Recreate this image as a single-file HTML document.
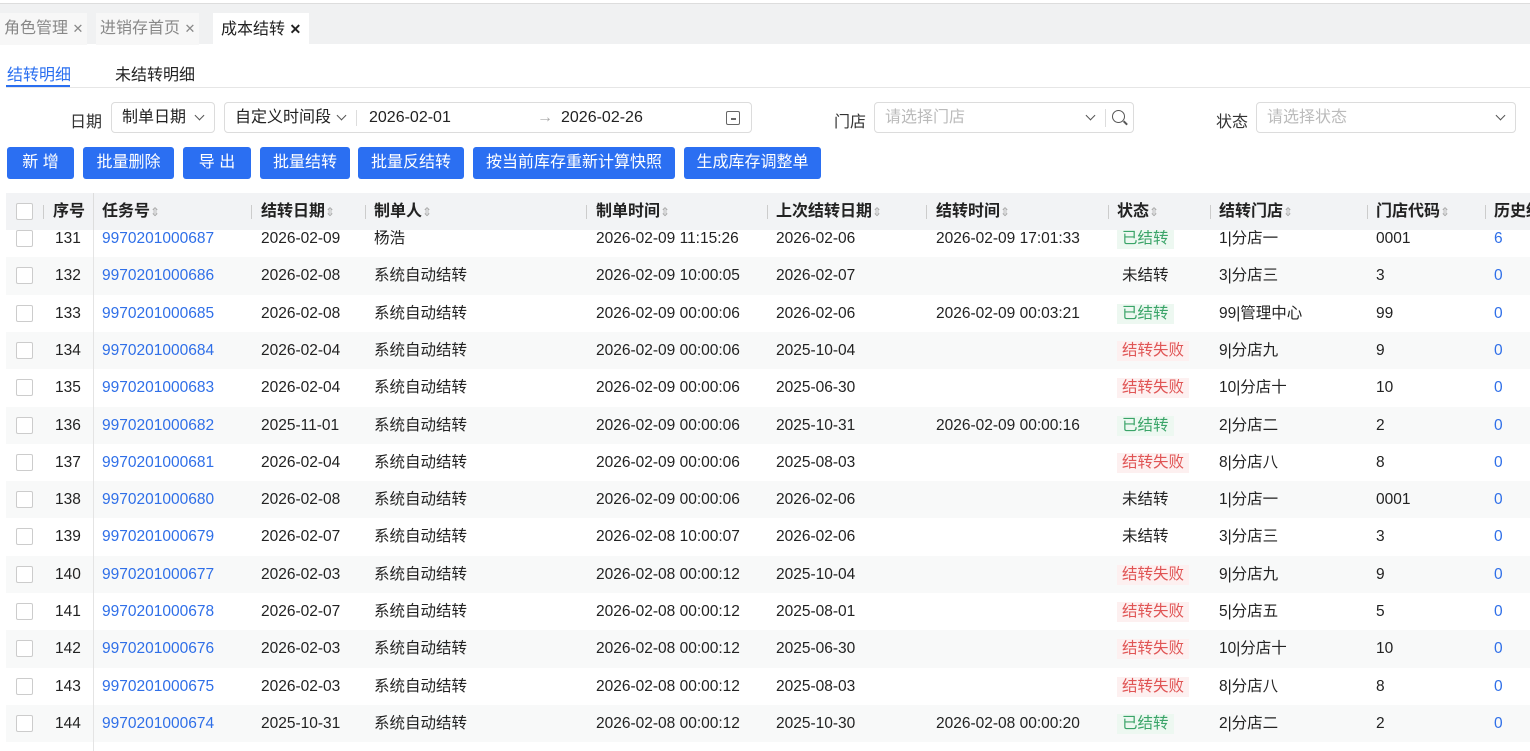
<!DOCTYPE html>
<html><head><meta charset="utf-8"><style>
*{box-sizing:border-box;margin:0;padding:0}
body{width:1530px;height:751px;overflow:hidden;background:#fff;font-family:"Liberation Sans","Noto Sans CJK SC",sans-serif;font-size:15.5px;color:#222;position:relative}
.tabbar{position:absolute;left:0;top:3px;width:1530px;height:41px;background:#f0f1f2;border-top:1px solid #ddd}
.tab{position:absolute;top:9px;height:32px;line-height:32px;padding:0 4px;font-size:16px;color:#888;background:#f7f7f7}
.tab.act{background:#fff;color:#222}
.sub{position:absolute;top:61px;font-size:16px}
.ln{position:absolute;left:6px;top:87px;width:1524px;height:1px;background:#e6e6e6}
.ul{position:absolute;left:6px;top:85px;width:64px;height:2px;background:#2a6ff0}
.lbl{position:absolute;top:108px;font-size:16px;color:#333}
.box{position:absolute;top:102px;height:31px;border:1px solid #dcdcdc;border-radius:4px;line-height:30px;font-size:16px;padding-left:10px}
.ph{color:#bbb}
.chev{position:absolute;width:7px;height:7px;border-right:1.5px solid #555;border-bottom:1.5px solid #555;transform:rotate(45deg)}
.btn{position:absolute;top:147px;height:32px;line-height:32px;background:#2b6ff2;color:#fff;border-radius:3px;text-align:center;font-size:16px}
.hdr{position:absolute;left:6px;top:193px;width:1524px;height:37px;background:#f2f3f5;z-index:2;font-weight:bold;font-size:16px}
.row{position:absolute;left:6px;width:1524px;height:37.3px;line-height:37px}
.row.g{background:#f8f9f9}
.c{position:absolute;top:0;white-space:nowrap}
.cb{position:absolute;left:10px;top:10px;width:17px;height:17px;border:1px solid #ccc;background:#fff;border-radius:2px}
.hdr .c{line-height:37px}
.dv{position:absolute;top:12px;width:1px;height:14px;background:#ccc}
.s{color:#aaa;font-weight:normal;font-size:12px}
a{color:#2f6fe8;text-decoration:none}
.ok{background:#edf8f1;color:#3aa468;padding:0 5px;line-height:20px;display:inline-block}
.no{background:#fdf0f0;color:#e05555;padding:0 5px;line-height:20px;display:inline-block}
.un{padding:0 5px}
</style></head><body>
<div class="tabbar">
<div class="tab" style="left:0">角色管理 <span style="font-size:13px">✕</span></div>
<div class="tab" style="left:96px">进销存首页 <span style="font-size:13px">✕</span></div>
<div class="tab act" style="left:213px;padding:0 8px">成本结转 <b style="font-size:14px">✕</b></div>
</div>
<div class="sub" style="left:7px;color:#2a6ff0">结转明细</div>
<div class="sub" style="left:115px">未结转明细</div>
<div class="ln"></div><div class="ul"></div>

<div class="lbl" style="left:70px">日期</div>
<div class="box" style="left:111px;width:104px">制单日期<span class="chev" style="left:84px;top:9px"></span></div>
<div class="box" style="left:224px;width:528px">自定义时间段<span class="chev" style="left:113px;top:9px"></span>
<span style="position:absolute;left:131px;top:7px;width:1px;height:16px;background:#ddd"></span>
<span style="position:absolute;left:144px">2026-02-01</span>
<span style="position:absolute;left:312px;color:#aaa">→</span>
<span style="position:absolute;left:336px">2026-02-26</span>
<span style="position:absolute;left:501px;top:8px;width:14px;height:14px;border:1.5px solid #666;border-radius:2px"></span>
<span style="position:absolute;left:506px;top:15px;width:5px;height:1.5px;background:#666"></span>
</div>
<div class="lbl" style="left:834px">门店</div>
<div class="box ph" style="left:874px;width:260px">请选择门店<span class="chev" style="left:212px;top:9px"></span>
<span style="position:absolute;left:230px;top:6px;width:1px;height:18px;background:#ddd"></span>
<span style="position:absolute;left:237px;top:7px;width:13px;height:13px;border:1.7px solid #555;border-radius:50%"></span>
<span style="position:absolute;left:248px;top:19px;width:5px;height:1.7px;background:#555;transform:rotate(45deg)"></span></div>
<div class="lbl" style="left:1216px">状态</div>
<div class="box ph" style="left:1256px;width:260px">请选择状态<span class="chev" style="left:240px;top:9px"></span></div>

<div class="btn" style="left:7px;width:67px">新 增</div>
<div class="btn" style="left:83px;width:91px">批量删除</div>
<div class="btn" style="left:183px;width:68px">导 出</div>
<div class="btn" style="left:260px;width:90px">批量结转</div>
<div class="btn" style="left:358px;width:106px">批量反结转</div>
<div class="btn" style="left:473px;width:202px">按当前库存重新计算快照</div>
<div class="btn" style="left:684px;width:137px">生成库存调整单</div>

<div class="hdr">
<span class="cb"></span><span class="dv" style="left:37px"></span>
<span class="c" style="left:47px">序号</span>
<span style="position:absolute;left:87px;top:0;width:1px;height:37px;background:#ddd"></span>
<span class="c" style="left:96px">任务号<span class="s">⇕</span></span><span class="dv" style="left:245px"></span>
<span class="c" style="left:255px">结转日期<span class="s">⇕</span></span><span class="dv" style="left:359px"></span>
<span class="c" style="left:368px">制单人<span class="s">⇕</span></span><span class="dv" style="left:580px"></span>
<span class="c" style="left:590px">制单时间<span class="s">⇕</span></span><span class="dv" style="left:761px"></span>
<span class="c" style="left:770px">上次结转日期<span class="s">⇕</span></span><span class="dv" style="left:920px"></span>
<span class="c" style="left:930px">结转时间<span class="s">⇕</span></span><span class="dv" style="left:1102px"></span>
<span class="c" style="left:1111px">状态<span class="s">⇕</span></span><span class="dv" style="left:1204px"></span>
<span class="c" style="left:1213px">结转门店<span class="s">⇕</span></span><span class="dv" style="left:1361px"></span>
<span class="c" style="left:1370px">门店代码<span class="s">⇕</span></span><span class="dv" style="left:1479px"></span>
<span class="c" style="left:1488px">历史结转</span>
</div>
<div style="position:absolute;left:93px;top:230px;width:1px;height:521px;background:#e4e4e4;z-index:1"></div>

<div class="row" style="top:220px"><span class="cb"></span><span class="c" style="left:49px">131</span><span class="c" style="left:96px"><a>9970201000687</a></span><span class="c" style="left:255px">2026-02-09</span><span class="c" style="left:368px">杨浩</span><span class="c" style="left:590px">2026-02-09 11:15:26</span><span class="c" style="left:770px">2026-02-06</span><span class="c" style="left:930px">2026-02-09 17:01:33</span><span class="c" style="left:1111px"><span class="ok">已结转</span></span><span class="c" style="left:1213px">1|分店一</span><span class="c" style="left:1370px">0001</span><span class="c" style="left:1488px"><a>6</a></span></div>
<div class="row g" style="top:257.3px"><span class="cb"></span><span class="c" style="left:49px">132</span><span class="c" style="left:96px"><a>9970201000686</a></span><span class="c" style="left:255px">2026-02-08</span><span class="c" style="left:368px">系统自动结转</span><span class="c" style="left:590px">2026-02-09 10:00:05</span><span class="c" style="left:770px">2026-02-07</span><span class="c" style="left:1111px"><span class="un">未结转</span></span><span class="c" style="left:1213px">3|分店三</span><span class="c" style="left:1370px">3</span><span class="c" style="left:1488px"><a>0</a></span></div>
<div class="row" style="top:294.6px"><span class="cb"></span><span class="c" style="left:49px">133</span><span class="c" style="left:96px"><a>9970201000685</a></span><span class="c" style="left:255px">2026-02-08</span><span class="c" style="left:368px">系统自动结转</span><span class="c" style="left:590px">2026-02-09 00:00:06</span><span class="c" style="left:770px">2026-02-06</span><span class="c" style="left:930px">2026-02-09 00:03:21</span><span class="c" style="left:1111px"><span class="ok">已结转</span></span><span class="c" style="left:1213px">99|管理中心</span><span class="c" style="left:1370px">99</span><span class="c" style="left:1488px"><a>0</a></span></div>
<div class="row g" style="top:331.9px"><span class="cb"></span><span class="c" style="left:49px">134</span><span class="c" style="left:96px"><a>9970201000684</a></span><span class="c" style="left:255px">2026-02-04</span><span class="c" style="left:368px">系统自动结转</span><span class="c" style="left:590px">2026-02-09 00:00:06</span><span class="c" style="left:770px">2025-10-04</span><span class="c" style="left:1111px"><span class="no">结转失败</span></span><span class="c" style="left:1213px">9|分店九</span><span class="c" style="left:1370px">9</span><span class="c" style="left:1488px"><a>0</a></span></div>
<div class="row" style="top:369.2px"><span class="cb"></span><span class="c" style="left:49px">135</span><span class="c" style="left:96px"><a>9970201000683</a></span><span class="c" style="left:255px">2026-02-04</span><span class="c" style="left:368px">系统自动结转</span><span class="c" style="left:590px">2026-02-09 00:00:06</span><span class="c" style="left:770px">2025-06-30</span><span class="c" style="left:1111px"><span class="no">结转失败</span></span><span class="c" style="left:1213px">10|分店十</span><span class="c" style="left:1370px">10</span><span class="c" style="left:1488px"><a>0</a></span></div>
<div class="row g" style="top:406.5px"><span class="cb"></span><span class="c" style="left:49px">136</span><span class="c" style="left:96px"><a>9970201000682</a></span><span class="c" style="left:255px">2025-11-01</span><span class="c" style="left:368px">系统自动结转</span><span class="c" style="left:590px">2026-02-09 00:00:06</span><span class="c" style="left:770px">2025-10-31</span><span class="c" style="left:930px">2026-02-09 00:00:16</span><span class="c" style="left:1111px"><span class="ok">已结转</span></span><span class="c" style="left:1213px">2|分店二</span><span class="c" style="left:1370px">2</span><span class="c" style="left:1488px"><a>0</a></span></div>
<div class="row" style="top:443.8px"><span class="cb"></span><span class="c" style="left:49px">137</span><span class="c" style="left:96px"><a>9970201000681</a></span><span class="c" style="left:255px">2026-02-04</span><span class="c" style="left:368px">系统自动结转</span><span class="c" style="left:590px">2026-02-09 00:00:06</span><span class="c" style="left:770px">2025-08-03</span><span class="c" style="left:1111px"><span class="no">结转失败</span></span><span class="c" style="left:1213px">8|分店八</span><span class="c" style="left:1370px">8</span><span class="c" style="left:1488px"><a>0</a></span></div>
<div class="row g" style="top:481.1px"><span class="cb"></span><span class="c" style="left:49px">138</span><span class="c" style="left:96px"><a>9970201000680</a></span><span class="c" style="left:255px">2026-02-08</span><span class="c" style="left:368px">系统自动结转</span><span class="c" style="left:590px">2026-02-09 00:00:06</span><span class="c" style="left:770px">2026-02-06</span><span class="c" style="left:1111px"><span class="un">未结转</span></span><span class="c" style="left:1213px">1|分店一</span><span class="c" style="left:1370px">0001</span><span class="c" style="left:1488px"><a>0</a></span></div>
<div class="row" style="top:518.4px"><span class="cb"></span><span class="c" style="left:49px">139</span><span class="c" style="left:96px"><a>9970201000679</a></span><span class="c" style="left:255px">2026-02-07</span><span class="c" style="left:368px">系统自动结转</span><span class="c" style="left:590px">2026-02-08 10:00:07</span><span class="c" style="left:770px">2026-02-06</span><span class="c" style="left:1111px"><span class="un">未结转</span></span><span class="c" style="left:1213px">3|分店三</span><span class="c" style="left:1370px">3</span><span class="c" style="left:1488px"><a>0</a></span></div>
<div class="row g" style="top:555.7px"><span class="cb"></span><span class="c" style="left:49px">140</span><span class="c" style="left:96px"><a>9970201000677</a></span><span class="c" style="left:255px">2026-02-03</span><span class="c" style="left:368px">系统自动结转</span><span class="c" style="left:590px">2026-02-08 00:00:12</span><span class="c" style="left:770px">2025-10-04</span><span class="c" style="left:1111px"><span class="no">结转失败</span></span><span class="c" style="left:1213px">9|分店九</span><span class="c" style="left:1370px">9</span><span class="c" style="left:1488px"><a>0</a></span></div>
<div class="row" style="top:593px"><span class="cb"></span><span class="c" style="left:49px">141</span><span class="c" style="left:96px"><a>9970201000678</a></span><span class="c" style="left:255px">2026-02-07</span><span class="c" style="left:368px">系统自动结转</span><span class="c" style="left:590px">2026-02-08 00:00:12</span><span class="c" style="left:770px">2025-08-01</span><span class="c" style="left:1111px"><span class="no">结转失败</span></span><span class="c" style="left:1213px">5|分店五</span><span class="c" style="left:1370px">5</span><span class="c" style="left:1488px"><a>0</a></span></div>
<div class="row g" style="top:630.3px"><span class="cb"></span><span class="c" style="left:49px">142</span><span class="c" style="left:96px"><a>9970201000676</a></span><span class="c" style="left:255px">2026-02-03</span><span class="c" style="left:368px">系统自动结转</span><span class="c" style="left:590px">2026-02-08 00:00:12</span><span class="c" style="left:770px">2025-06-30</span><span class="c" style="left:1111px"><span class="no">结转失败</span></span><span class="c" style="left:1213px">10|分店十</span><span class="c" style="left:1370px">10</span><span class="c" style="left:1488px"><a>0</a></span></div>
<div class="row" style="top:667.6px"><span class="cb"></span><span class="c" style="left:49px">143</span><span class="c" style="left:96px"><a>9970201000675</a></span><span class="c" style="left:255px">2026-02-03</span><span class="c" style="left:368px">系统自动结转</span><span class="c" style="left:590px">2026-02-08 00:00:12</span><span class="c" style="left:770px">2025-08-03</span><span class="c" style="left:1111px"><span class="no">结转失败</span></span><span class="c" style="left:1213px">8|分店八</span><span class="c" style="left:1370px">8</span><span class="c" style="left:1488px"><a>0</a></span></div>
<div class="row g" style="top:704.9px"><span class="cb"></span><span class="c" style="left:49px">144</span><span class="c" style="left:96px"><a>9970201000674</a></span><span class="c" style="left:255px">2025-10-31</span><span class="c" style="left:368px">系统自动结转</span><span class="c" style="left:590px">2026-02-08 00:00:12</span><span class="c" style="left:770px">2025-10-30</span><span class="c" style="left:930px">2026-02-08 00:00:20</span><span class="c" style="left:1111px"><span class="ok">已结转</span></span><span class="c" style="left:1213px">2|分店二</span><span class="c" style="left:1370px">2</span><span class="c" style="left:1488px"><a>0</a></span></div>
</body></html>
